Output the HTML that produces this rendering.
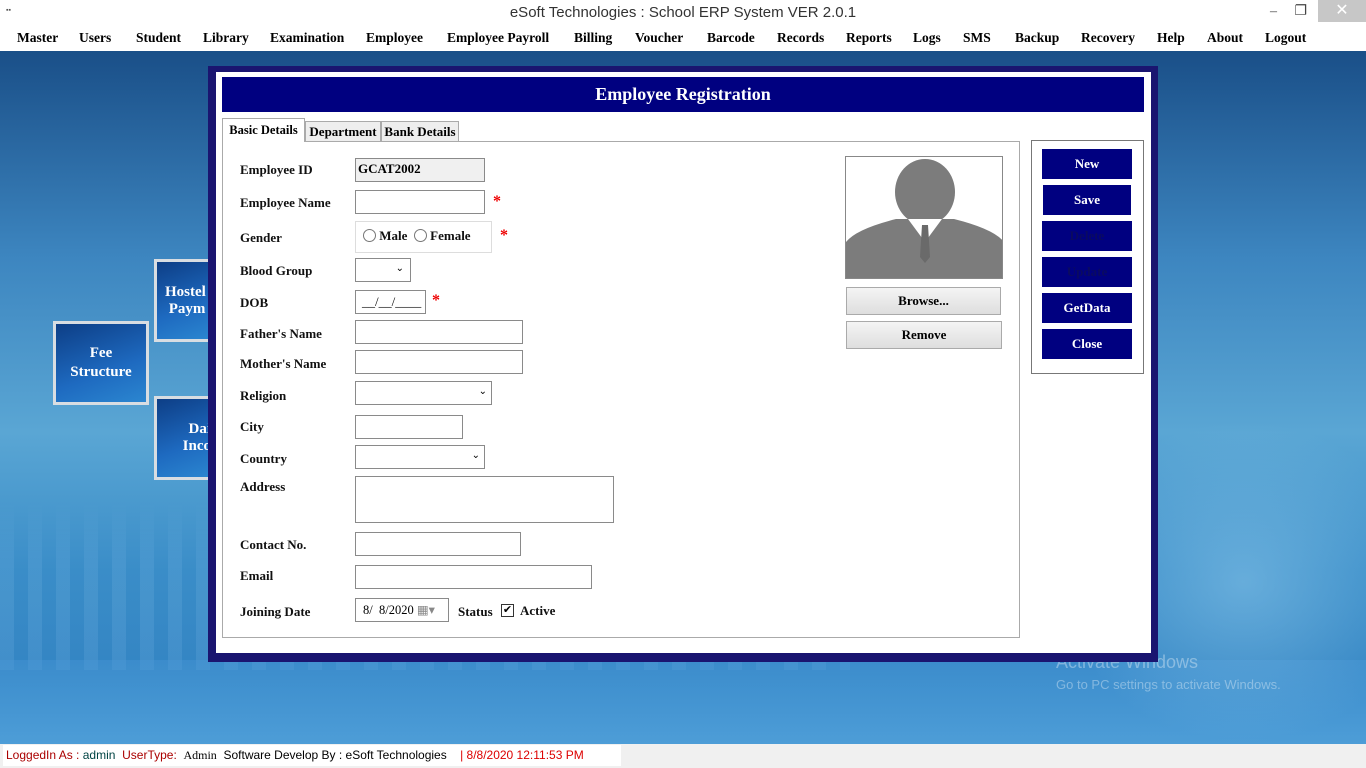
<!DOCTYPE html>
<html><head><style>
*{margin:0;padding:0;box-sizing:border-box}
body{width:1366px;height:768px;position:relative;overflow:hidden;font-family:"Liberation Serif",serif;font-size:13px;background:#fff}
.a{position:absolute}
.tb{top:0;left:0;width:1366px;height:26px;background:#fff;font-family:"Liberation Sans",sans-serif;font-size:15px;color:#333;text-align:center;line-height:26px}
.menu{top:26px;left:0;width:1366px;height:25px;background:#fff;font-weight:bold;font-size:13.5px}
.menu span{position:absolute;top:4px}
.bg{top:51px;left:0;width:1366px;height:693px;background:linear-gradient(180deg,#1a4f88 0%,#3d86c0 30%,#5aa6d4 55%,#3a8dc8 75%,#2f7fc0 100%)}
.tile{border:3px solid #d8dde2;background:linear-gradient(160deg,#0d3e86,#1e6ac0 60%,#2b86d0);color:#fff;font-weight:bold;font-size:15px;text-align:center}
.lbl{font-weight:bold;font-size:13px;color:#111}
.in{border:1px solid #8a8a8a;background:#fff;height:24px}
.btn{background:#000080;color:#fff;font-weight:bold;font-size:13px;text-align:center;line-height:30px;width:90px;height:30px;left:1042px}
.star{color:#e00;font-weight:bold;font-size:16px}
.gb{background:linear-gradient(#f4f4f4,#dedede);border:1px solid #aaa;text-align:center;font-weight:bold;line-height:26px}
</style></head><body>
<div class="a tb">eSoft Technologies : School ERP System VER 2.0.1</div>
<div class="a" style="left:6px;top:6px;width:12px;height:12px;font-size:7px;color:#555">▪▪</div>
<div class="a" style="left:1270px;top:3px;font-size:14px;color:#444">–&nbsp;&nbsp;&nbsp;&nbsp;&nbsp;❐</div>
<div class="a" style="left:1318px;top:0;width:48px;height:22px;background:#c7c7c7;color:#fff;text-align:center;line-height:22px;font-family:'Liberation Sans';font-size:16px">✕</div>
<div class="a menu">
<span style="left:17px">Master</span><span style="left:79px">Users</span><span style="left:136px">Student</span><span style="left:203px">Library</span><span style="left:270px">Examination</span><span style="left:366px">Employee</span><span style="left:447px">Employee Payroll</span><span style="left:574px">Billing</span><span style="left:635px">Voucher</span><span style="left:707px">Barcode</span><span style="left:777px">Records</span><span style="left:846px">Reports</span><span style="left:913px">Logs</span><span style="left:963px">SMS</span><span style="left:1015px">Backup</span><span style="left:1081px">Recovery</span><span style="left:1157px">Help</span><span style="left:1207px">About</span><span style="left:1265px">Logout</span>
</div>
<div class="a bg"></div>
<div class="a" style="left:0;top:500px;width:850px;height:170px;background:repeating-linear-gradient(90deg,rgba(170,215,250,.12) 0 14px,rgba(0,0,0,0) 14px 28px);-webkit-mask-image:linear-gradient(180deg,transparent,#000 40%)"></div>
<div class="a" style="left:0;top:660px;width:1366px;height:84px;background:linear-gradient(180deg,rgba(70,150,215,.4),rgba(90,170,225,.7))"></div>
<div class="a" style="left:1060px;top:420px;width:306px;height:324px;background:radial-gradient(ellipse at 60% 50%,rgba(140,200,235,.55),rgba(0,0,0,0) 70%)"></div>
<div class="a tile" style="left:154px;top:259px;width:60px;height:83px;padding-top:22px;text-align:left;padding-left:8px">Hostel<br>&nbsp;Paym</div>
<div class="a tile" style="left:53px;top:321px;width:96px;height:84px;padding-top:20px;line-height:19px">Fee<br>Structure</div>
<div class="a tile" style="left:154px;top:396px;width:60px;height:84px;padding-top:22px;text-align:right;padding-right:0">Dai<br>Inco</div>
<div class="a" style="left:1056px;top:652px;color:rgba(255,255,255,.35);font-family:'Liberation Sans';font-size:18px">Activate Windows</div>
<div class="a" style="left:1056px;top:677px;color:rgba(255,255,255,.35);font-family:'Liberation Sans';font-size:13px">Go to PC settings to activate Windows.</div>

<div class="a" style="left:208px;top:66px;width:950px;height:596px;background:#1a1570"></div>
<div class="a" style="left:216px;top:72px;width:935px;height:581px;background:#fff"></div>
<div class="a" style="left:222px;top:77px;width:922px;height:35px;background:#000080;color:#fff;font-weight:bold;font-size:18px;text-align:center;line-height:35px">Employee Registration</div>
<div class="a" style="left:222px;top:141px;width:798px;height:497px;border:1px solid #aaa"></div>
<div class="a" style="left:222px;top:118px;width:83px;height:24px;border:1px solid #aaa;border-bottom:none;background:#fff;font-weight:bold;font-size:12.5px;text-align:center;line-height:22px">Basic Details</div>
<div class="a" style="left:305px;top:121px;width:76px;height:21px;border:1px solid #aaa;background:#eee;font-weight:bold;text-align:center;line-height:20px">Department</div>
<div class="a" style="left:381px;top:121px;width:78px;height:21px;border:1px solid #aaa;background:#eee;font-weight:bold;text-align:center;line-height:20px">Bank Details</div>

<div class="a lbl" style="left:240px;top:162px">Employee ID</div>
<div class="a in" style="left:355px;top:158px;width:130px;background:#f0f0f0;font-weight:bold;padding:2px">GCAT2002</div>
<div class="a lbl" style="left:240px;top:195px">Employee Name</div>
<div class="a in" style="left:355px;top:190px;width:130px"></div><div class="a star" style="left:493px;top:193px">*</div>
<div class="a lbl" style="left:240px;top:230px">Gender</div>
<div class="a" style="left:355px;top:221px;width:137px;height:32px;border:1px solid #ddd"></div>
<div class="a lbl" style="left:363px;top:228px"><span style="display:inline-block;width:13px;height:13px;border:1px solid #777;border-radius:50%;vertical-align:-2px"></span> Male &nbsp;<span style="display:inline-block;width:13px;height:13px;border:1px solid #777;border-radius:50%;vertical-align:-2px"></span> Female</div>
<div class="a star" style="left:500px;top:227px">*</div>
<div class="a lbl" style="left:240px;top:263px">Blood Group</div>
<div class="a in" style="left:355px;top:258px;width:56px;font-size:10px;text-align:right;padding:4px 6px">⌄</div>
<div class="a lbl" style="left:240px;top:295px">DOB</div>
<div class="a in" style="left:355px;top:290px;width:71px;padding:3px 6px">__/__/____</div><div class="a star" style="left:432px;top:292px">*</div>
<div class="a lbl" style="left:240px;top:326px">Father's Name</div>
<div class="a in" style="left:355px;top:320px;width:168px"></div>
<div class="a lbl" style="left:240px;top:356px">Mother's Name</div>
<div class="a in" style="left:355px;top:350px;width:168px"></div>
<div class="a lbl" style="left:240px;top:388px">Religion</div>
<div class="a in" style="left:355px;top:381px;width:137px;font-size:10px;text-align:right;padding:4px 4px">⌄</div>
<div class="a lbl" style="left:240px;top:419px">City</div>
<div class="a in" style="left:355px;top:415px;width:108px"></div>
<div class="a lbl" style="left:240px;top:451px">Country</div>
<div class="a in" style="left:355px;top:445px;width:130px;font-size:10px;text-align:right;padding:4px 4px">⌄</div>
<div class="a lbl" style="left:240px;top:479px">Address</div>
<div class="a in" style="left:355px;top:476px;width:259px;height:47px"></div>
<div class="a lbl" style="left:240px;top:537px">Contact No.</div>
<div class="a in" style="left:355px;top:532px;width:166px"></div>
<div class="a lbl" style="left:240px;top:568px">Email</div>
<div class="a in" style="left:355px;top:565px;width:237px"></div>
<div class="a lbl" style="left:240px;top:604px">Joining Date</div>
<div class="a in" style="left:355px;top:598px;width:94px;padding:3px 7px;font-size:12.5px">8/&nbsp; 8/2020 <span style="color:#888">▦▾</span></div>
<div class="a lbl" style="left:458px;top:604px">Status</div>
<div class="a" style="left:501px;top:604px;width:13px;height:13px;border:1px solid #333;font-size:11px;line-height:11px;text-align:center">✔</div>
<div class="a lbl" style="left:520px;top:603px">Active</div>

<div class="a" style="left:845px;top:156px;width:158px;height:123px;border:1px solid #888;background:#fff;overflow:hidden">
<svg width="158" height="123" viewBox="0 0 158 123"><rect width="158" height="123" fill="#fff"/>
<path d="M0 123 L0 85 Q10 72 50 62 L108 62 Q148 72 158 85 L158 123Z" fill="#7c7c7c"/>
<ellipse cx="79" cy="35" rx="30" ry="33" fill="#7c7c7c"/>
<path d="M62 62 L79 85 L96 62Z" fill="#fff"/><path d="M76 68 L82 68 L84 100 L79 106 L74 100Z" fill="#6a6a6a"/>
</svg></div>
<div class="a gb" style="left:846px;top:287px;width:155px;height:28px">Browse...</div>
<div class="a gb" style="left:846px;top:321px;width:156px;height:28px">Remove</div>

<div class="a" style="left:1031px;top:140px;width:113px;height:234px;border:1px solid #777"></div>
<div class="a btn" style="top:149px">New</div>
<div class="a btn" style="top:185px;left:1043px;width:88px">Save</div>
<div class="a btn" style="top:221px;color:#0a0a60">Delete</div>
<div class="a btn" style="top:257px;color:#0a0a60">Update</div>
<div class="a btn" style="top:293px">GetData</div>
<div class="a btn" style="top:329px">Close</div>

<div class="a" style="left:0;top:744px;width:1366px;height:24px;background:#f0f0f0"></div>
<div class="a" style="left:3px;top:745px;width:618px;height:21px;background:#fff;font-family:'Liberation Sans',sans-serif;font-size:12px;line-height:21px;padding-left:3px;white-space:nowrap">
<span style="color:#a00">LoggedIn As :</span> <span style="color:#044">admin</span>&nbsp; <span style="color:#a00">UserType:</span>&nbsp; <span style="font-family:'Liberation Serif'">Admin</span>&nbsp; Software Develop By : eSoft Technologies &nbsp;&nbsp; <span style="color:#d00">| 8/8/2020 12:11:53 PM</span></div>
</body></html>
